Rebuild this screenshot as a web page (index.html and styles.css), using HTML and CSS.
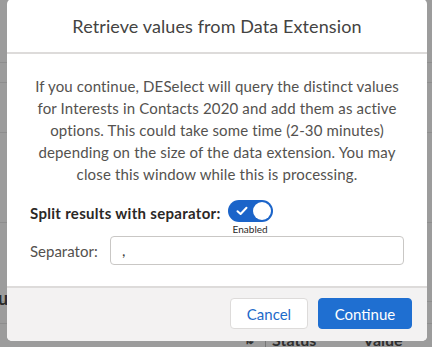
FILE: index.html
```html
<!DOCTYPE html>
<html>
<head>
<meta charset="utf-8">
<link rel="stylesheet" href="styles.css">
</head>
<body>
<div class="page">
  <div class="bg-rows">
    <div class="bg-row r1"></div>
    <div class="bg-row r2"></div>
    <div class="bg-row r3"></div>
    <div class="bg-row r4"></div>
    <div class="bg-row r5"><span class="bg-frag">u</span></div>
    <div class="bg-row r6"></div>
  </div>
  <div class="bg-head">
    <span class="bg-sort">&#8645;</span>
    <span class="bg-sep"></span>
    <span class="bg-col">Status</span>
    <span class="bg-col val">Value</span>
  </div>

  <div class="modal">
    <div class="modal-header">
      <h2 class="modal-title">Retrieve values from Data Extension</h2>
    </div>
    <div class="modal-body">
      <p class="modal-text">If you continue, DESelect will query the distinct values for Interests in Contacts 2020 and add them as active options. This could take some time (2-30 minutes) depending on the size of the data extension. You may close this window while this is processing.</p>
      <div class="split-row">
        <span class="split-label">Split results with separator:</span>
        <div class="toggle-wrap">
          <span class="toggle">
            <svg class="check" width="12" height="10" viewBox="0 0 12 10"><path d="M1.5 5.2 L4.6 8 L10.5 1.8" fill="none" stroke="#fff" stroke-width="2" stroke-linecap="round" stroke-linejoin="round"/></svg>
            <span class="knob"></span>
          </span>
          <span class="toggle-state">Enabled</span>
        </div>
      </div>
      <div class="sep-row">
        <label class="sep-label">Separator:</label>
        <div class="sep-input">,</div>
      </div>
    </div>
    <div class="modal-footer">
      <button class="btn btn-neutral">Cancel</button>
      <button class="btn btn-brand">Continue</button>
    </div>
  </div>
</div>
</body>
</html>
```
FILE: styles.css
```css
* { box-sizing: border-box; }
html, body { margin: 0; padding: 0; }
body {
  width: 432px;
  height: 347px;
  overflow: hidden;
  background: #9c9c9c;
  font-family: "Lato", "Open Sans", sans-serif;
}
.page {
  position: relative;
  width: 432px;
  height: 347px;
}
.bg-rows {
  display: flex;
  flex-direction: column;
}
.bg-row { border-bottom: 1px solid #8e8e8e; position: relative; }
.r1 { height: 63px; }
.r2 { height: 20px; }
.r3 { height: 50px; }
.r4 { height: 90px; }
.r5 { height: 79px; }
.r6 { height: 22px; }
.bg-frag {
  position: absolute;
  left: -2px;
  top: 64px;
  font-size: 18px;
  font-weight: 700;
  color: #2a2a2a;
}
.bg-head {
  position: relative;
  height: 12px;
  margin-top: 8px;
  font-weight: 700;
  font-size: 16px;
  line-height: 16px;
  color: #2e2e2e;
}
.bg-sort { position: absolute; left: 244px; top: 0; font-size: 12px; color: #333; }
.bg-sep { position: absolute; left: 265px; top: 0; width: 1px; height: 16px; background: #777; }
.bg-col { position: absolute; left: 272px; top: 0; }
.bg-col.val { left: 363px; }

.modal {
  position: absolute;
  left: 7px;
  top: -1px;
  width: 420px;
  height: 342px;
  background: #fff;
  border-radius: 5px;
  overflow: hidden;
  display: flex;
  flex-direction: column;
}
.modal-header {
  height: 55px;
  border-bottom: 2px solid #dddbda;
  display: flex;
  align-items: center;
  justify-content: center;
}
.modal-title {
  margin: 0;
  font-size: 18px;
  font-weight: 400;
  color: #444342;
  letter-spacing: 0.1px;
}
.modal-body {
  flex: 1;
  padding: 21px 20px 0 20px;
}
.modal-text {
  margin: 0;
  text-align: center;
  font-size: 15px;
  line-height: 22px;
  letter-spacing: 0.15px;
  color: #54524f;
}
.split-row {
  display: flex;
  align-items: flex-start;
  margin-top: 15px;
  padding-left: 3px;
}
.split-label {
  font-weight: 700;
  font-size: 15px;
  letter-spacing: 0.3px;
  color: #2b2826;
  margin-top: 4px;
}
.toggle-wrap {
  display: flex;
  flex-direction: column;
  align-items: center;
  margin-left: 7px;
}
.toggle {
  position: relative;
  width: 45px;
  height: 22px;
  border-radius: 11px;
  background: #1b64c9;
  display: flex;
  align-items: center;
  padding-left: 8px;
}
.knob {
  position: absolute;
  right: 2px;
  top: 2px;
  width: 18px;
  height: 18px;
  border-radius: 50%;
  background: #fff;
}
.toggle-state {
  font-size: 10px;
  line-height: 12px;
  color: #2b2826;
  margin-top: 1px;
}
.sep-row {
  display: flex;
  align-items: center;
  margin-top: 1px;
  padding-left: 3px;
}
.sep-label {
  font-size: 15px;
  color: #54514e;
  width: 80px;
}
.sep-input {
  width: 294px;
  height: 29px;
  border: 1px solid #c9c7c5;
  border-radius: 4px;
  padding-left: 11px;
  font-size: 15px;
  line-height: 27px;
  color: #3e3e3c;
}
.modal-footer {
  height: 55px;
  background: #f3f2f2;
  border-top: 2px solid #dddbda;
  display: flex;
  justify-content: flex-end;
  align-items: flex-start;
  gap: 10px;
  padding: 10px 15px 0 0;
}
.btn {
  height: 31px;
  border-radius: 4px;
  font-family: "Lato", "Open Sans", sans-serif;
  font-size: 15px;
  padding: 0;
}
.btn-neutral {
  width: 78px;
  background: #fff;
  border: 1px solid #dddbda;
  color: #1d6ac9;
}
.btn-brand {
  width: 94px;
  background: #1f6fd1;
  border: 1px solid #1f6fd1;
  color: #fff;
}
```
